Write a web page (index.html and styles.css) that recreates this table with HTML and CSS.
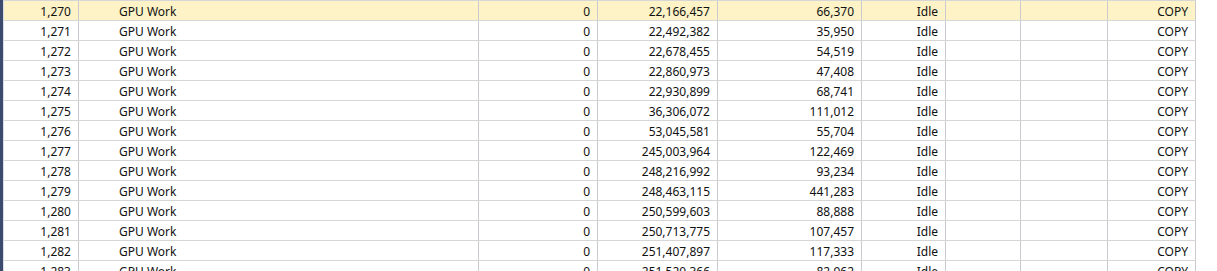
FILE: index.html
```html
<!DOCTYPE html>
<html>
<head>
<meta charset="utf-8">
<link rel="stylesheet" href="styles.css">
</head>
<body>
<div class="frame">
  <div class="sidebar"></div>
  <div class="grid">
    <div class="row selected"><div class="c r">1,270</div><div class="c name">GPU Work</div><div class="c r">0</div><div class="c r">22,166,457</div><div class="c r">66,370</div><div class="c r">Idle</div><div class="c"></div><div class="c"></div><div class="c r">COPY</div></div>
    <div class="row"><div class="c r">1,271</div><div class="c name">GPU Work</div><div class="c r">0</div><div class="c r">22,492,382</div><div class="c r">35,950</div><div class="c r">Idle</div><div class="c"></div><div class="c"></div><div class="c r">COPY</div></div>
    <div class="row"><div class="c r">1,272</div><div class="c name">GPU Work</div><div class="c r">0</div><div class="c r">22,678,455</div><div class="c r">54,519</div><div class="c r">Idle</div><div class="c"></div><div class="c"></div><div class="c r">COPY</div></div>
    <div class="row"><div class="c r">1,273</div><div class="c name">GPU Work</div><div class="c r">0</div><div class="c r">22,860,973</div><div class="c r">47,408</div><div class="c r">Idle</div><div class="c"></div><div class="c"></div><div class="c r">COPY</div></div>
    <div class="row"><div class="c r">1,274</div><div class="c name">GPU Work</div><div class="c r">0</div><div class="c r">22,930,899</div><div class="c r">68,741</div><div class="c r">Idle</div><div class="c"></div><div class="c"></div><div class="c r">COPY</div></div>
    <div class="row"><div class="c r">1,275</div><div class="c name">GPU Work</div><div class="c r">0</div><div class="c r">36,306,072</div><div class="c r">111,012</div><div class="c r">Idle</div><div class="c"></div><div class="c"></div><div class="c r">COPY</div></div>
    <div class="row"><div class="c r">1,276</div><div class="c name">GPU Work</div><div class="c r">0</div><div class="c r">53,045,581</div><div class="c r">55,704</div><div class="c r">Idle</div><div class="c"></div><div class="c"></div><div class="c r">COPY</div></div>
    <div class="row"><div class="c r">1,277</div><div class="c name">GPU Work</div><div class="c r">0</div><div class="c r">245,003,964</div><div class="c r">122,469</div><div class="c r">Idle</div><div class="c"></div><div class="c"></div><div class="c r">COPY</div></div>
    <div class="row"><div class="c r">1,278</div><div class="c name">GPU Work</div><div class="c r">0</div><div class="c r">248,216,992</div><div class="c r">93,234</div><div class="c r">Idle</div><div class="c"></div><div class="c"></div><div class="c r">COPY</div></div>
    <div class="row"><div class="c r">1,279</div><div class="c name">GPU Work</div><div class="c r">0</div><div class="c r">248,463,115</div><div class="c r">441,283</div><div class="c r">Idle</div><div class="c"></div><div class="c"></div><div class="c r">COPY</div></div>
    <div class="row"><div class="c r">1,280</div><div class="c name">GPU Work</div><div class="c r">0</div><div class="c r">250,599,603</div><div class="c r">88,888</div><div class="c r">Idle</div><div class="c"></div><div class="c"></div><div class="c r">COPY</div></div>
    <div class="row"><div class="c r">1,281</div><div class="c name">GPU Work</div><div class="c r">0</div><div class="c r">250,713,775</div><div class="c r">107,457</div><div class="c r">Idle</div><div class="c"></div><div class="c"></div><div class="c r">COPY</div></div>
    <div class="row"><div class="c r">1,282</div><div class="c name">GPU Work</div><div class="c r">0</div><div class="c r">251,407,897</div><div class="c r">117,333</div><div class="c r">Idle</div><div class="c"></div><div class="c"></div><div class="c r">COPY</div></div>
    <div class="row"><div class="c r">1,283</div><div class="c name">GPU Work</div><div class="c r">0</div><div class="c r">251,520,366</div><div class="c r">82,962</div><div class="c r">Idle</div><div class="c"></div><div class="c"></div><div class="c r">COPY</div></div>
  </div>
</div>
</body>
</html>
```
FILE: styles.css
```css
html, body {
  margin: 0;
  padding: 0;
  background: #ffffff;
}
body {
  width: 1217px;
  height: 271px;
  overflow: hidden;
  font-family: "Noto Sans", "Open Sans", sans-serif;
  font-size: 12px;
  color: #111111;
}
.frame {
  display: flex;
  height: 271px;
}
.sidebar {
  width: 3px;
  flex: none;
  background: #3b4a6e;
  border-right: 1px solid #d8dde6;
}
.grid {
  display: flex;
  flex-direction: column;
  border-top: 1px solid #d6d6d6;
  width: 1192px;
}
.row {
  display: grid;
  grid-template-columns: 75px 400px 119px 120px 144px 84px 75px 87px 88px;
  height: 20px;
  box-sizing: border-box;
  border-bottom: 1px solid #d6d6d6;
  flex: none;
}
.row.selected {
  background: #fdf3c6;
}
.c {
  box-sizing: border-box;
  border-right: 1px solid #c9c9cf;
  padding: 2px 7px 0;
  line-height: 17px;
  white-space: nowrap;
  overflow: hidden;
}
.r {
  text-align: right;
}
.name {
  padding-left: 40px;
}
```
